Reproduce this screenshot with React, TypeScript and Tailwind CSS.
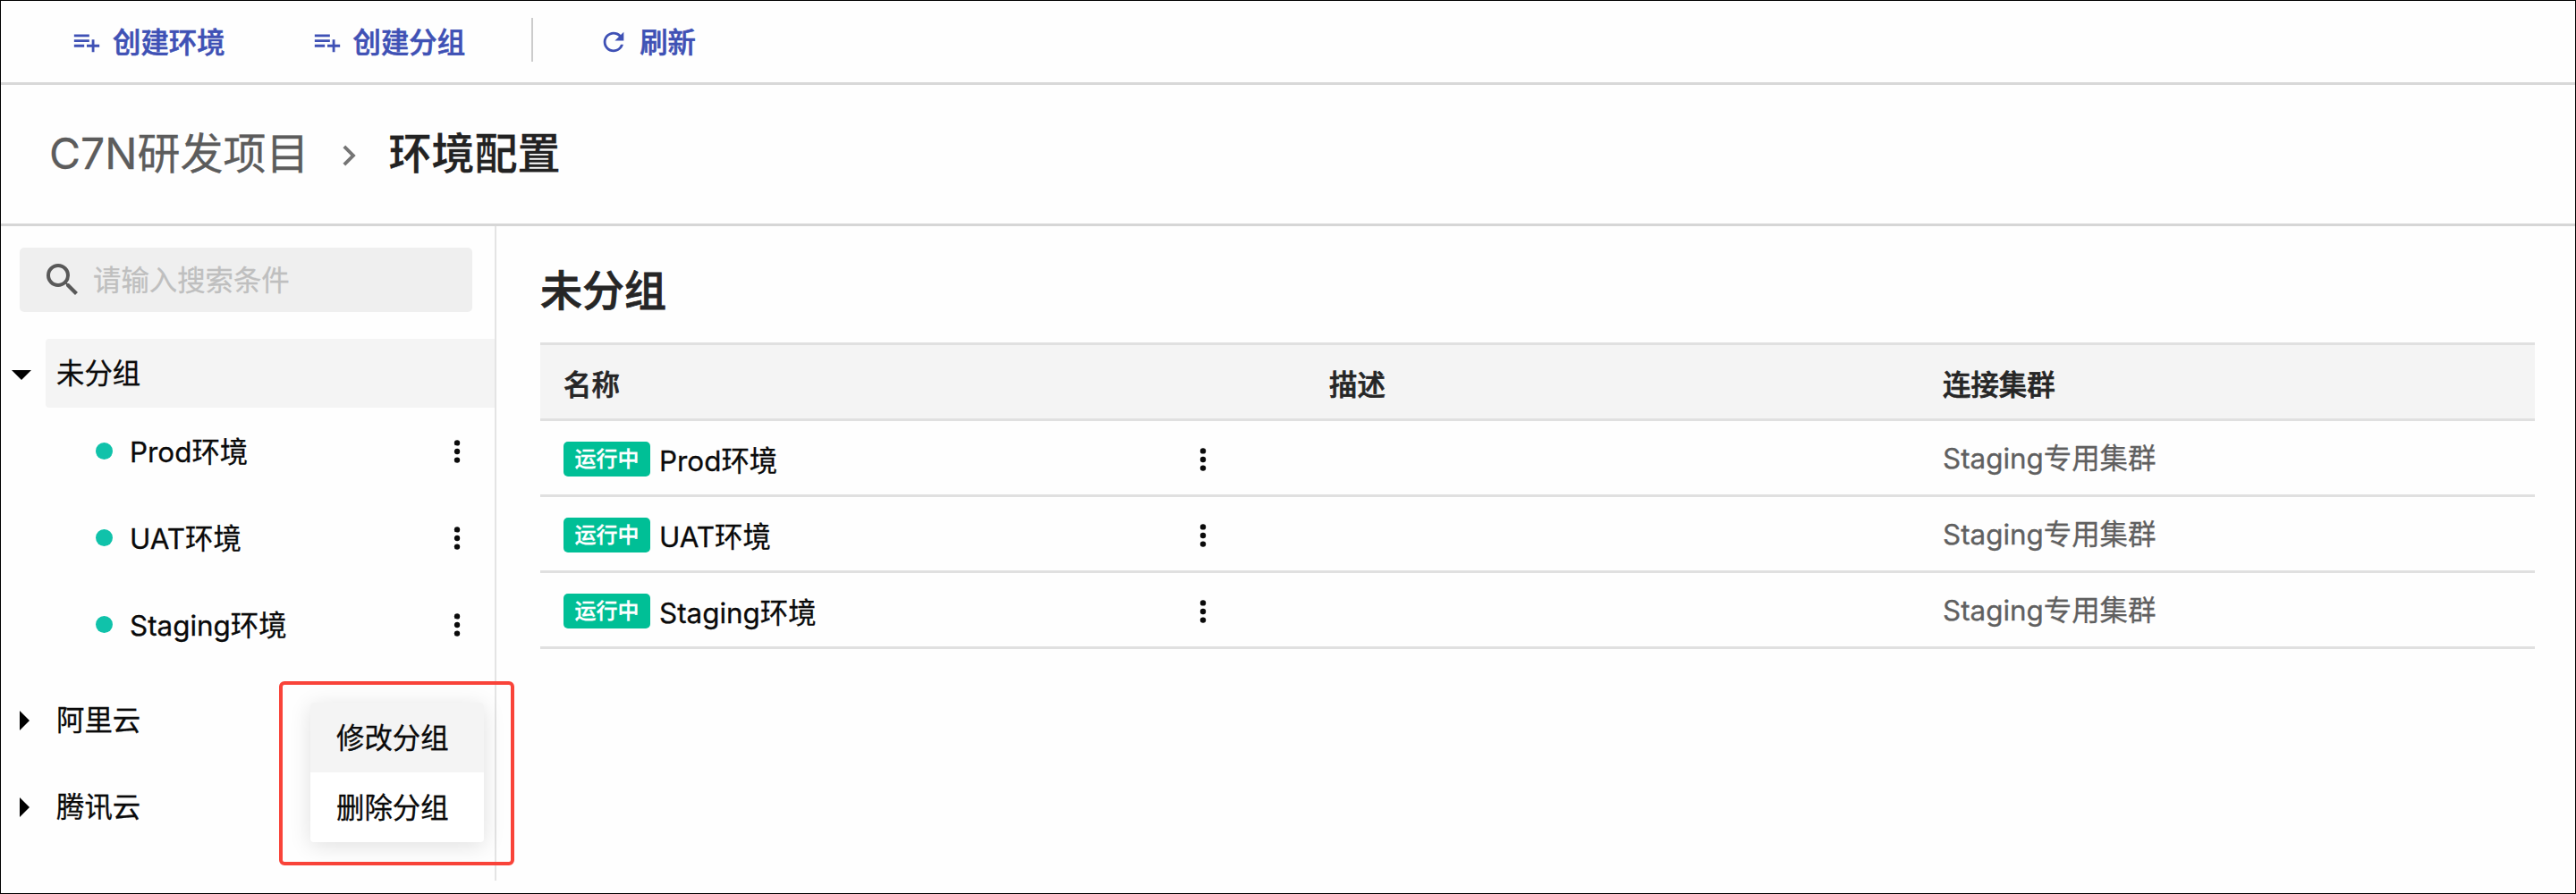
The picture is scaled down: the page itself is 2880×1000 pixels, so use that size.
import React from 'react';
import { MdRefresh, MdSearch, MdNavigateNext } from 'react-icons/md';

const environments = ['Prod', 'UAT', 'Staging'];

function PlaylistAddIcon() {
  return (
    <svg viewBox="0 0 24 24" className="size-[34px] shrink-0" fill="currentColor">
      <path d="M14 10H2v2h12v-2zm0-4H2v2h12V6zm4 8v-4h-2v4h-4v2h4v4h2v-4h4v-2h-4zM2 16h8v-2H2v2z" />
    </svg>
  );
}

function MoreIcon() {
  return (
    <svg viewBox="0 0 8 28" className="h-7 w-2 shrink-0" fill="#0a0a0a">
      <circle cx="4" cy="4.4" r="3.2" />
      <circle cx="4" cy="14" r="3.2" />
      <circle cx="4" cy="23.6" r="3.2" />
    </svg>
  );
}

function Toolbar() {
  return (
    <header className="flex h-[94px] shrink-0 items-center border-b-[3px] border-[#d8d8d8] pl-[79px] text-[31.4px] font-medium text-[#3f51b5] [-webkit-text-stroke:0.6px]">
      <button className="flex items-center">
        <PlaylistAddIcon />
        <span className="ml-3 pt-1">创建环境</span>
      </button>
      <button className="ml-[97px] flex items-center">
        <PlaylistAddIcon />
        <span className="ml-3 pt-1">创建分组</span>
      </button>
      <div className="mb-1 ml-[74px] h-[49px] w-0.5 bg-[#cccccc]" />
      <button className="ml-[73px] flex items-center">
        <MdRefresh className="size-[34px]" />
        <span className="ml-3 pt-1">刷新</span>
      </button>
    </header>
  );
}

function Breadcrumb() {
  return (
    <nav className="flex h-[158px] shrink-0 items-center border-b-[3px] border-[#d6d6d6] pl-[54px] text-[48px]">
      <span className="pb-0.5 text-[#5c5c5c]">C7N研发项目</span>
      <MdNavigateNext className="ml-[22px] mr-[21px] mt-0.5 size-[46px] text-[#757575]" />
      <span className="pb-0.5 font-medium text-[#222222]">环境配置</span>
    </nav>
  );
}

function CollapsedGroup({ name }: { name: string }) {
  return (
    <div className="flex h-[97px] items-center pl-[21px]">
      <svg viewBox="0 0 11 22" className="h-[22px] w-[11px]">
        <path d="M0 0l11 11L0 22z" />
      </svg>
      <span className="ml-[30px] pt-0.5">{name}</span>
    </div>
  );
}

function GroupMenu() {
  return (
    <div className="absolute left-[311px] top-[509px] flex h-[206px] w-[263px] rounded-[6px] border-4 border-[#f94339] pl-[31px] pt-5">
      <div className="flex h-[156px] w-[194px] flex-col rounded-[4px] bg-white shadow-[0_4px_24px_rgba(0,0,0,0.12)]">
        <div className="flex h-[78px] items-center rounded-t-[4px] bg-[#f4f4f4] pl-[29px] pt-1">修改分组</div>
        <div className="flex h-[78px] items-center pl-[29px] pt-1">删除分组</div>
      </div>
    </div>
  );
}

function Sidebar() {
  return (
    <aside className="relative h-[732px] w-[554px] shrink-0 border-r-2 border-[#e4e4e4] pt-6">
      <div className="ml-[21px] flex h-[72px] w-[506px] items-center rounded-[5px] bg-[#efefef] pl-6">
        <MdSearch className="size-[48px] text-[#595959]" />
        <span className="ml-2.5 pt-1 text-[#bfbfbf]">请输入搜索条件</span>
      </div>
      <div className="mt-[30px] flex h-[77px] items-center pl-3">
        <svg viewBox="0 0 22 11" className="mt-1 h-[11px] w-[22px]">
          <path d="M0 0h22L11 11z" />
        </svg>
        <div className="ml-4 flex h-full flex-1 items-center rounded-l-[4px] bg-[#f4f4f4] pl-3 pt-0.5">未分组</div>
      </div>
      {environments.map((name) => (
        <div key={name} className="flex h-[97px] items-center pl-[106px] pr-[38px]">
          <span className="size-[19px] rounded-full bg-[#10c2aa]" />
          <span className="ml-[19px] flex-1 pt-1">{name}环境</span>
          <MoreIcon />
        </div>
      ))}
      <div className="mt-[10px]">
        <CollapsedGroup name="阿里云" />
        <CollapsedGroup name="腾讯云" />
      </div>
      <GroupMenu />
    </aside>
  );
}

function EnvironmentTable() {
  return (
    <main className="flex-1 pl-[49px] pr-[45px] pt-12">
      <h1 className="text-[47px] font-medium text-[#262626] [-webkit-text-stroke:0.8px]">未分组</h1>
      <div className="mt-[35px] flex h-[88px] items-center border-y-[3px] border-[#e0e0e0] bg-[#f4f4f4] pl-[26px] pt-2.5 font-medium text-[#262626] [-webkit-text-stroke:0.7px]">
        <span className="w-[856px]">名称</span>
        <span className="w-[686px]">描述</span>
        <span>连接集群</span>
      </div>
      {environments.map((name) => (
        <div key={name} className="flex h-[85px] items-center border-b-[3px] border-[#e0e0e0] pl-[26px]">
          <div className="flex w-[711px] items-center pt-[3px]">
            <span className="flex h-[39px] w-[97px] items-center justify-center rounded-[5px] bg-[#00bf96] text-[24px] font-medium text-white">
              运行中
            </span>
            <span className="ml-2.5 pt-[6px]">{name}环境</span>
          </div>
          <div className="flex w-[831px] items-center pt-1">
            <MoreIcon />
          </div>
          <span className="pt-[3px] text-[#606060]">Staging专用集群</span>
        </div>
      ))}
    </main>
  );
}

export default function App() {
  return (
    <div className="flex h-[1000px] w-[2880px] flex-col overflow-hidden border border-black bg-[#fefefe] font-['Inter','Noto_Sans_CJK_SC',sans-serif] text-[31.4px] leading-none whitespace-nowrap text-[#0a0a0a] [-webkit-text-stroke:0.3px]">
      <Toolbar />
      <Breadcrumb />
      <div className="flex flex-1">
        <Sidebar />
        <EnvironmentTable />
      </div>
    </div>
  );
}
